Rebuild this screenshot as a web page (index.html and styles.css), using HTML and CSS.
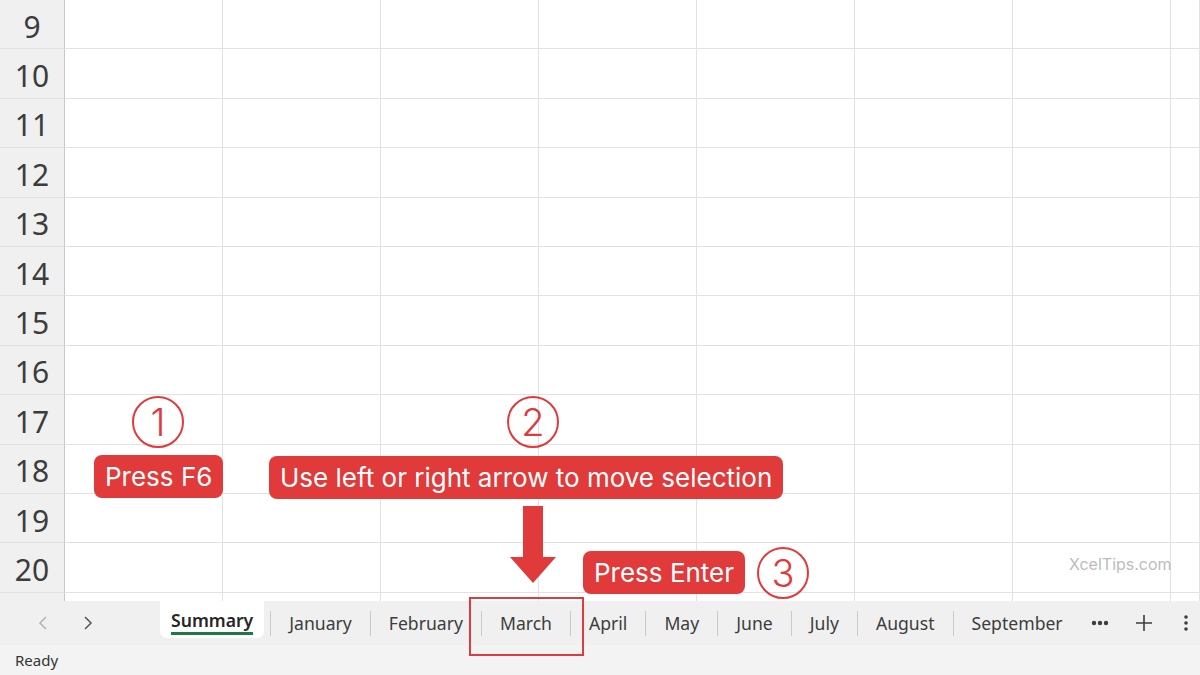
FILE: index.html
```html
<!DOCTYPE html>
<html>
<head>
<meta charset="utf-8">
<title>Sheet tabs</title>
<link rel="stylesheet" href="styles.css">
</head>
<body>
<div class="app">
  <div class="sheet">
    <div class="row"><div class="rh">9</div><div class="c"></div><div class="c"></div><div class="c"></div><div class="c"></div><div class="c"></div><div class="c"></div><div class="c"></div><div class="c last"></div></div>
    <div class="row"><div class="rh">10</div><div class="c"></div><div class="c"></div><div class="c"></div><div class="c"></div><div class="c"></div><div class="c"></div><div class="c"></div><div class="c last"></div></div>
    <div class="row"><div class="rh">11</div><div class="c"></div><div class="c"></div><div class="c"></div><div class="c"></div><div class="c"></div><div class="c"></div><div class="c"></div><div class="c last"></div></div>
    <div class="row"><div class="rh">12</div><div class="c"></div><div class="c"></div><div class="c"></div><div class="c"></div><div class="c"></div><div class="c"></div><div class="c"></div><div class="c last"></div></div>
    <div class="row"><div class="rh">13</div><div class="c"></div><div class="c"></div><div class="c"></div><div class="c"></div><div class="c"></div><div class="c"></div><div class="c"></div><div class="c last"></div></div>
    <div class="row"><div class="rh">14</div><div class="c"></div><div class="c"></div><div class="c"></div><div class="c"></div><div class="c"></div><div class="c"></div><div class="c"></div><div class="c last"></div></div>
    <div class="row"><div class="rh">15</div><div class="c"></div><div class="c"></div><div class="c"></div><div class="c"></div><div class="c"></div><div class="c"></div><div class="c"></div><div class="c last"></div></div>
    <div class="row"><div class="rh">16</div><div class="c"></div><div class="c"></div><div class="c"></div><div class="c"></div><div class="c"></div><div class="c"></div><div class="c"></div><div class="c last"></div></div>
    <div class="row"><div class="rh">17</div><div class="c"></div><div class="c"></div><div class="c"></div><div class="c"></div><div class="c"></div><div class="c"></div><div class="c"></div><div class="c last"></div></div>
    <div class="row"><div class="rh">18</div><div class="c"></div><div class="c"></div><div class="c"></div><div class="c"></div><div class="c"></div><div class="c"></div><div class="c"></div><div class="c last"></div></div>
    <div class="row"><div class="rh">19</div><div class="c"></div><div class="c"></div><div class="c"></div><div class="c"></div><div class="c"></div><div class="c"></div><div class="c"></div><div class="c last"></div></div>
    <div class="row"><div class="rh">20</div><div class="c"></div><div class="c"></div><div class="c"></div><div class="c"></div><div class="c"></div><div class="c"></div><div class="c"></div><div class="c last"></div></div>
    <div class="row tail"><div class="rh"></div><div class="c"></div><div class="c"></div><div class="c"></div><div class="c"></div><div class="c"></div><div class="c"></div><div class="c"></div><div class="c last"></div></div>
  </div>

  <div class="tabbar">
    <div class="nav">
      <span class="nv dis"><svg width="10" height="16" viewBox="0 0 10 16"><path d="M8 2 L2 8 L8 14" fill="none" stroke="currentColor" stroke-width="1.5"/></svg></span>
      <span class="nv"><svg width="10" height="16" viewBox="0 0 10 16"><path d="M2 2 L8 8 L2 14" fill="none" stroke="currentColor" stroke-width="1.5"/></svg></span>
    </div>
    <div class="tabs">
      <div class="tab active"><span class="lbl">Summary</span></div>
      <span class="sep"></span>
      <div class="tab">January</div>
      <span class="sep"></span>
      <div class="tab">February</div>
      <span class="sep"></span>
      <div class="tab">March</div>
      <span class="sep"></span>
      <div class="tab">April</div>
      <span class="sep"></span>
      <div class="tab">May</div>
      <span class="sep"></span>
      <div class="tab">June</div>
      <span class="sep"></span>
      <div class="tab">July</div>
      <span class="sep"></span>
      <div class="tab">August</div>
      <span class="sep"></span>
      <div class="tab">September</div>
    </div>
    <div class="tools">
      <span class="tool"><svg width="18" height="6" viewBox="0 0 18 6"><circle cx="3" cy="3" r="2.2"/><circle cx="9" cy="3" r="2.2"/><circle cx="15" cy="3" r="2.2"/></svg></span>
      <span class="tool"><svg width="18" height="18" viewBox="0 0 18 18"><path d="M9 1 V17 M1 9 H17" stroke="currentColor" stroke-width="1.6" fill="none"/></svg></span>
      <span class="tool kebab"><svg width="4" height="18" viewBox="0 0 4 18"><circle cx="2" cy="3" r="1.8"/><circle cx="2" cy="9" r="1.8"/><circle cx="2" cy="15" r="1.8"/></svg></span>
    </div>
  </div>

  <div class="status">Ready</div>

  <div class="num n1">1</div>
  <div class="badge b1">Press F6</div>
  <div class="num n2">2</div>
  <div class="badge b2">Use left or right arrow to move selection</div>
  <svg class="arrow" width="50" height="80" viewBox="0 0 50 80"><polygon points="13,0 33,0 33,51 46,51 23,77 0,51 13,51"/></svg>
  <div class="badge b3">Press Enter</div>
  <div class="num n3">3</div>
  <div class="hilite"></div>
  <div class="mark">XcelTips.com</div>
</div>
</body>
</html>
```

FILE: styles.css
```css
* { box-sizing: border-box; }
html, body { margin: 0; padding: 0; }
body { width: 1200px; height: 675px; overflow: hidden; background: #fff; font-family: "Noto Sans", sans-serif; }

.app { position: relative; width: 1200px; height: 675px; display: flex; flex-direction: column; }

.sheet { height: 601px; overflow: hidden; display: flex; flex-direction: column; }
.row { display: flex; height: 49.4px; flex: none; }
.row.tail { flex: 1; height: auto; }
.rh {
  width: 65px; flex: none;
  background: #f0f0f0;
  border-right: 1px solid #c9c9c9;
  border-bottom: 1px solid #e2e2e2;
  display: flex; align-items: center; justify-content: center;
  padding-top: 4px;
  font-size: 30px; color: #3c3c3c;
}
.c { width: 158px; flex: none; border-right: 1px solid #e2e2e2; border-bottom: 1px solid #e2e2e2; }
.c.last { flex: 1; width: auto; }
.tail .rh, .tail .c { border-bottom: none; }

.tabbar { height: 44px; flex: none; background: #f0f0f0; display: flex; align-items: center; }
.nav { width: 158px; flex: none; display: flex; align-items: center; height: 100%; padding-left: 38px; }
.nv { width: 45px; display: flex; align-items: center; color: #555; }
.nv.dis { color: #b3b3b3; }
.tabs { display: flex; align-items: center; height: 100%; flex: 1; min-width: 0; overflow: hidden; }
.tab { padding: 0 18px; font-size: 17.6px; color: #3d3d3d; white-space: nowrap; flex: none; }
.tab.active {
  align-self: flex-start; height: 37px;
  background: #fff; border-radius: 0 0 7px 7px;
  margin-left: 2px; margin-right: 6px;
  padding: 0 11px;
  display: flex; align-items: center;
}
.tab.active .lbl { font-weight: 600; color: #262626; border-bottom: 3px solid #1e7a45; padding-bottom: 1px; margin-top: 4px; line-height: 22px; }
.sep { width: 1px; height: 25px; background: #cacaca; flex: none; }

.tools { display: flex; align-items: center; gap: 14px; width: 115px; flex: none; height: 100%; }
.tool { width: 30px; flex: none; display: flex; justify-content: center; align-items: center; color: #3d3d3d; fill: #3d3d3d; }
.tool.kebab { width: 27px; justify-content: flex-end; padding-right: 12px; }

.status { height: 30px; flex: none; background: #f3f3f3; font-size: 15px; color: #333; padding-left: 15px; display: flex; align-items: center; }

/* overlays */
.badge {
  position: absolute; height: 43px;
  background: #e03a3b; color: #fff; border-radius: 8px;
  font-family: "Inter", sans-serif; font-size: 26px;
  padding: 0 11px; display: flex; align-items: center; white-space: nowrap;
}
.b1 { left: 94px; top: 455px; }
.b2 { left: 269px; top: 456px; }
.b3 { left: 583px; top: 551px; }
.num {
  position: absolute; width: 52px; height: 52px; border-radius: 50%;
  border: 2px solid #e03a3b; color: #e03a3b;
  font-family: "Inter", sans-serif; font-weight: 300; font-size: 38px;
  display: flex; align-items: center; justify-content: center;
}
.n1 { left: 132px; top: 396px; }
.n2 { left: 507px; top: 396px; }
.n3 { left: 757px; top: 547px; }
.arrow { position: absolute; left: 510px; top: 506px; fill: #e03a3b; }
.hilite { position: absolute; left: 469px; top: 597px; width: 115px; height: 59px; border: 2px solid #de3b3c; }
.mark { position: absolute; left: 1069px; top: 554px; font-family: "Inter", sans-serif; font-size: 16px; color: #bcbcbc; }
```
